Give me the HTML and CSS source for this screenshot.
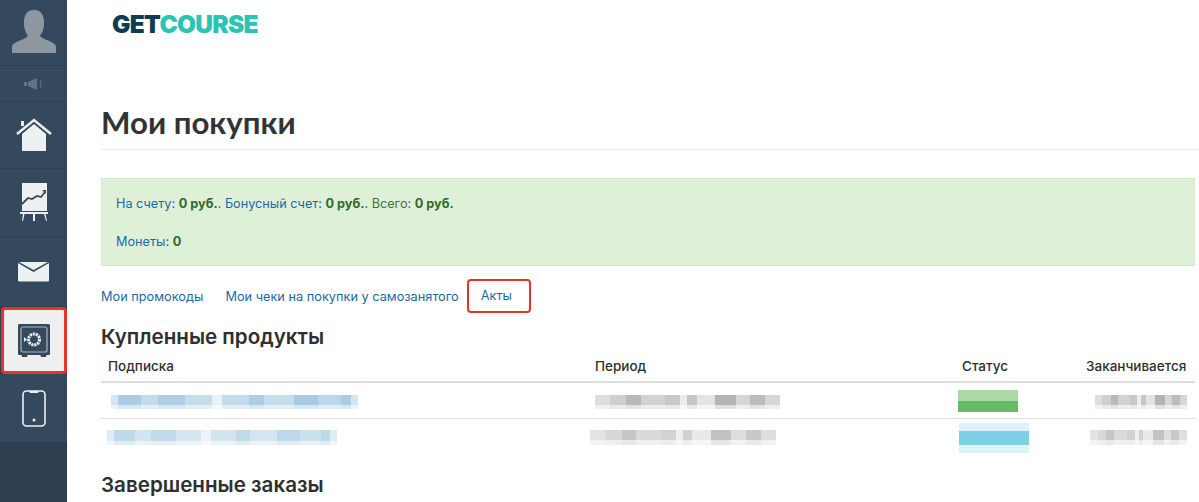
FILE: index.html
```html
<!DOCTYPE html>
<html lang="ru">
<head>
<meta charset="utf-8">
<title>Мои покупки</title>
<link rel="stylesheet" href="styles.css">
</head>
<body>
<div class="page">
  <nav class="side">
    <div class="item avatar">
      <svg width="46" height="43" viewBox="0 1 46 43"><path fill="#8e979f" d="M1 44v-6c0-3 3-4.500 8-6.500 5-2 7-3 8-5-2-2-3.500-6-4-10C12.500 7 15 1 23 1s10.500 6 10 15.500c-.5 4-2 8-4 10 1 2 3 3 8 5 5 2 8 3.500 8 6.500v6z"/></svg>
    </div>
    <div class="item speaker">
      <svg width="22" height="14" viewBox="0 0 22 14"><path fill="#5f7488" d="M1 5h3v4H1zM5 5l9-4v12l-9-4z"/><path fill="none" stroke="#5f7488" d="M17 3c1.500 2.500 1.500 5.500 0 8"/></svg>
    </div>
    <div class="item home">
      <svg width="36" height="34" viewBox="0 0 36 34"><path fill="#ecf0f1" d="M6 16 18 6l12 10v17H6z"/><path fill="none" stroke="#ecf0f1" stroke-width="2.500" d="M1 16 18 2l17 14"/><path fill="#ecf0f1" d="M5 3h3v5H5z"/></svg>
    </div>
    <div class="item chart">
      <svg width="28" height="39" viewBox="0 0 28 39"><path fill="#ecf0f1" d="M2 0h25v28H2z"/><path fill="none" stroke="#34495e" stroke-width="1.800" d="M2 21l6-6 4 1 5-3 4 1 4-5"/><path fill="#34495e" d="M22 7h4v4z"/><path fill="#ecf0f1" d="M0 29h28v2H0zM3 31h1.500l-1.500 7H2zM13 31h2v7h-2zM24 31h1.500l1.500 7h-1z"/></svg>
    </div>
    <div class="item mail">
      <svg width="33" height="20" viewBox="0 0 33 20"><path fill="#ecf0f1" d="M1 1l15.500 9L32 1v17.500a1 1 0 0 1-1 1H2a1 1 0 0 1-1-1z"/><path fill="#ecf0f1" d="M2 0h29l-14.500 8z"/></svg>
    </div>
    <div class="item safe">
      <svg width="34" height="36" viewBox="0 0 34 36"><path fill="#34495e" d="M2.500 1h29A1.500 1.500 0 0 1 33 2.500v28a1.500 1.500 0 0 1-1.500 1.500H2.500A1.500 1.500 0 0 1 1 30.500v-28A1.500 1.500 0 0 1 2.500 1zM4 31h7l-1 3H5zM23 31h7l-1 3h-5z"/><rect x="4" y="4" width="26" height="25" rx="2" fill="none" stroke="#a9b4be" stroke-width="1.200"/><circle cx="17" cy="16.500" r="5.500" fill="none" stroke="#ecf0f1" stroke-width="3" stroke-dasharray="2.200 .8"/><path fill="#ecf0f1" d="M7 14l3 2.500L7 19z"/></svg>
    </div>
    <div class="item phone">
      <svg width="24" height="37" viewBox="0 0 24 37"><rect x="1" y="1" width="22" height="35" rx="3.500" fill="none" stroke="#ecf0f1" stroke-width="1.600"/><path fill="#ecf0f1" d="M7 1h10l-1 2H8z"/><circle cx="12" cy="30" r="1.500" fill="#ecf0f1"/></svg>
    </div>
  </nav>
  <main class="main">
    <div class="logo"><span class="logo-get">GET</span><span class="logo-course">COURSE</span></div>
    <h1 class="title">Мои покупки</h1>
    <div class="balance">
      <p class="balance-line"><a class="link">На счету:</a> <b>0 руб.</b>. <a class="link">Бонусный счет:</a> <b>0 руб.</b>. Всего: <b>0 руб.</b></p>
      <p class="balance-line"><a class="link">Монеты:</a> <b>0</b></p>
    </div>
    <div class="tabs">
      <a class="link tab">Мои промокоды</a>
      <a class="link tab">Мои чеки на покупки у самозанятого</a>
      <a class="link tab tab-marked">Акты</a>
    </div>
    <h2 class="section">Купленные продукты</h2>
    <div class="table">
      <div class="row head">
        <div class="c1">Подписка</div>
        <div class="c2">Период</div>
        <div class="c3">Статус</div>
        <div class="c4">Заканчивается</div>
      </div>
      <div class="row body-row">
        <div class="c1"><span class="blur blur-link link-a"></span></div>
        <div class="c2"><span class="blur blur-gray gray-a"></span></div>
        <div class="c3"><span class="blur badge-green"></span></div>
        <div class="c4"><span class="blur blur-gray gray-b"></span></div>
      </div>
      <div class="row body-row last">
        <div class="c1"><span class="blur blur-link link-b"></span></div>
        <div class="c2"><span class="blur blur-gray gray-c"></span></div>
        <div class="c3"><span class="blur badge-blue"></span></div>
        <div class="c4"><span class="blur blur-gray gray-d"></span></div>
      </div>
    </div>
    <h2 class="section done">Завершенные заказы</h2>
  </main>
</div>
</body>
</html>
```
FILE: styles.css
```css
html, body { margin: 0; height: 100%; overflow: hidden; background: #fff; }
body { font-family: Inter, "Liberation Sans", sans-serif; color: #2f2f2f; }
.page { display: flex; height: 502px; }

.side { width: 67px; flex: none; background: #2c3e50; box-sizing: border-box; }
.item { background: #34495e; display: flex; align-items: center; justify-content: center; border-bottom: 1px solid #2c3e50; box-sizing: border-box; }
.avatar { height: 66px; align-items: flex-end; padding-bottom: 12px; }
.speaker { height: 36px; }
.home { height: 67px; }
.chart { height: 68px; }
.mail { height: 69px; border-bottom: 0; }
.safe { height: 67px; margin: 1px 0 0 1px; width: 66px; background: #efefef; border: 3px solid #e5352b; border-radius: 4px; }
.phone { height: 68px; border-bottom: 0; }

.main { flex: 1; min-width: 0; padding-left: 34px; }
.logo { margin: 11px 0 0 11px; height: 26px; font: 900 24.5px/26px Inter, "Liberation Sans", sans-serif; letter-spacing: -0.7px; }
.logo-get { color: #0f3d50; }
.logo-course { color: #2ac4b4; }

.title { margin: 67px 0 0; height: 45px; font: 700 31.2px/36px Lato, "Open Sans", sans-serif; color: #333; border-bottom: 1px solid #eaeaea; }

.balance { margin-top: 28px; width: 1094px; height: 88px; box-sizing: border-box; padding: 15px 14px 0; background: #dff0d8; border: 1px solid #d6e9c6; color: #3c763d; font: 400 12.7px/19px Inter, sans-serif; }
.balance-line { margin: 0 0 19px; }
.balance b { font-weight: 700; color: #2f6b31; }
.link { color: #1a6aa8; }

.tabs { display: flex; margin-top: 13px; height: 34px; align-items: center; font-size: 12.75px; }
.tab { margin-right: 22px; }
.tab-marked { margin-left: -14px; padding: 0 17px 0 12px; height: 34px; box-sizing: border-box; line-height: 29px; border: 2.500px solid #e5352b; border-radius: 4px; }

.section { margin: 10px 0 0; font: 600 20.6px/28px Inter, sans-serif; color: #2f2f2f; }
.done { margin-top: 15px; }

.table { width: 1094px; }
.row { display: flex; box-sizing: border-box; }
.head { height: 32px; align-items: center; font-size: 13.5px; font-weight: 500; border-bottom: 2px solid #ddd; }
.body-row { height: 36px; align-items: center; border-bottom: 1px solid #ddd; }
.body-row.last { border-bottom: 0; height: 37px; }
.c1 { width: 486px; padding-left: 7px; box-sizing: border-box; }
.c2 { width: 367px; padding-left: 8px; box-sizing: border-box; }
.c3 { width: 124px; padding-left: 8px; box-sizing: border-box; }
.c4 { flex: 1; white-space: nowrap; padding-left: 8px; box-sizing: border-box; }

.blur { display: block; height: 14px; }
.blur-link {
  background:
    linear-gradient(rgba(255,255,255,0) 72%, rgba(255,255,255,.55) 72%),
    linear-gradient(90deg, #d5e6f2 0 3%, #a9cde4 3% 12%, #c3dbec 12% 19%, #aecfe5 19% 30%, #c6ddec 30% 41%, #e8f1f7 41% 45%, #c3dbec 45% 56%, #abcee4 56% 62%, #c6ddec 62% 74%, #a6cbe3 74% 84%, #bcd7e9 84% 93%, #a9cde4 93% 97%, #d5e6f2 97%);
}
.blur-gray {
  background:
    linear-gradient(rgba(255,255,255,0) 70%, rgba(255,255,255,.6) 70%),
    linear-gradient(90deg, #ddd 0 8%, #cfcfcf 8% 17%, #b9b9b9 17% 25%, #d2d2d2 25% 38%, #c8c8c8 38% 46%, #ececec 46% 50%, #c6c6c6 50% 55%, #e4e4e4 55% 65%, #b4b4b4 65% 76%, #d6d6d6 76% 84%, #bcbcbc 84% 92%, #d6d6d6 92%);
}
.link-a { width: 247px; margin: 2px 0 0 3px; }
.link-b { width: 230px; height: 15px; margin-left: -1px; opacity: .75; }
.gray-a { width: 185px; margin-top: 2px; }
.gray-c { width: 186px; margin-left: -5px; height: 15px; opacity: .8; }
.gray-b { width: 92px; margin: 2px 0 0 9px; }
.gray-d { width: 97px; margin-left: 4px; height: 15px; opacity: .8; }
.badge-green { width: 60px; height: 22px; margin-left: -4px; background: linear-gradient(#add9a8 50%, #66bb66 50%); }
.badge-blue { width: 70px; height: 30px; margin-left: -3px; background: linear-gradient(#dff2f8 25%, #7fcfe6 25%, #7fcfe6 72%, #dff2f8 72%); }
```
